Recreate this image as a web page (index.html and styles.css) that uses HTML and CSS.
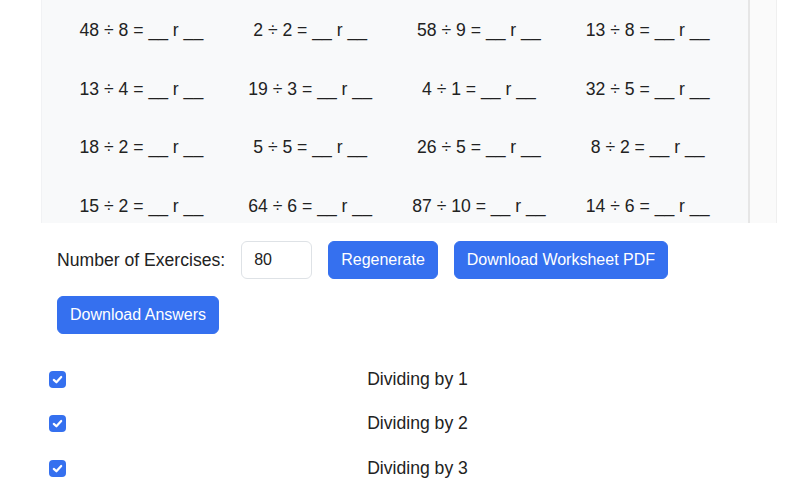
FILE: index.html
```html
<!DOCTYPE html>
<html lang="en">
<head>
  <meta charset="UTF-8" />
  <meta name="viewport" content="width=device-width, initial-scale=1.0"/>
  <title>Division Worksheet</title>
  <link rel="stylesheet" href="styles.css">
</head>
<body>

  <!-- WORKSHEET PREVIEW -->
  <div class="sheet">
    <div class="sheet-grid">
      <div class="problem">48 ÷ 8 = __ r __</div>
      <div class="problem">2 ÷ 2 = __ r __</div>
      <div class="problem">58 ÷ 9 = __ r __</div>
      <div class="problem">13 ÷ 8 = __ r __</div>
      <div class="problem">13 ÷ 4 = __ r __</div>
      <div class="problem">19 ÷ 3 = __ r __</div>
      <div class="problem">4 ÷ 1 = __ r __</div>
      <div class="problem">32 ÷ 5 = __ r __</div>
      <div class="problem">18 ÷ 2 = __ r __</div>
      <div class="problem">5 ÷ 5 = __ r __</div>
      <div class="problem">26 ÷ 5 = __ r __</div>
      <div class="problem">8 ÷ 2 = __ r __</div>
      <div class="problem">15 ÷ 2 = __ r __</div>
      <div class="problem">64 ÷ 6 = __ r __</div>
      <div class="problem">87 ÷ 10 = __ r __</div>
      <div class="problem">14 ÷ 6 = __ r __</div>
    </div>
    <div class="sheet-track"></div>
  </div>

  <!-- CONTROLS -->
  <div class="controls">
    <label class="count-label" for="count">Number of Exercises:</label>
    <input class="count-input" type="text" id="count" value="80" />
    <button class="btn">Regenerate</button>
    <button class="btn">Download Worksheet PDF</button>
    <button class="btn">Download Answers</button>
  </div>

  <!-- DIVISORS -->
  <div class="options">
    <label class="option">
      <span class="box"><svg width="17" height="17" viewBox="0 0 17 17"><path d="M4.8 8.9 L7.4 11.3 L12.2 6" fill="none" stroke="#fff" stroke-width="2.2" stroke-linecap="round" stroke-linejoin="round"/></svg></span>
      <span class="option-text">Dividing by 1</span>
    </label>
    <label class="option">
      <span class="box"><svg width="17" height="17" viewBox="0 0 17 17"><path d="M4.8 8.9 L7.4 11.3 L12.2 6" fill="none" stroke="#fff" stroke-width="2.2" stroke-linecap="round" stroke-linejoin="round"/></svg></span>
      <span class="option-text">Dividing by 2</span>
    </label>
    <label class="option">
      <span class="box"><svg width="17" height="17" viewBox="0 0 17 17"><path d="M4.8 8.9 L7.4 11.3 L12.2 6" fill="none" stroke="#fff" stroke-width="2.2" stroke-linecap="round" stroke-linejoin="round"/></svg></span>
      <span class="option-text">Dividing by 3</span>
    </label>
  </div>

</body>
</html>
```

FILE: styles.css
```css
body, html {
  margin: 0;
  padding: 0;
  font-family: "Liberation Sans", Arial, Helvetica, sans-serif;
  color: #222;
  background: #fff;
}

.sheet {
  display: flex;
  height: 223px;
  margin: 0 23px 0 41px;
  overflow: hidden;
}

.sheet-grid {
  flex: 1;
  display: grid;
  grid-template-columns: repeat(4, 1fr);
  grid-auto-rows: 58.7px;
  align-items: center;
  padding: 1px 16px 0 15px;
  background-color: #f8f9fa;
  border-left: 1px solid #f1f2f4;
}

.problem {
  text-align: center;
  font-size: 17.6px;
}

.sheet-track {
  width: 26px;
  background-color: #fafafa;
  border-left: 2px solid #e6e6e6;
  border-right: 1px solid #efefef;
}

.controls {
  display: flex;
  flex-wrap: wrap;
  align-items: center;
  gap: 17px 16px;
  margin: 18px 57px 0;
}

.count-label {
  font-size: 17.6px;
}

.count-input {
  box-sizing: border-box;
  width: 71px;
  height: 38px;
  padding: 6px 12px;
  font-family: inherit;
  font-size: 16px;
  color: #222;
  border: 1px solid #dee2e6;
  border-radius: 6px;
}

.btn {
  padding: 6px 12px;
  font-family: inherit;
  font-size: 16px;
  line-height: 24px;
  color: #fff;
  background-color: #3570ef;
  border: 1px solid #3570ef;
  border-radius: 6px;
  cursor: pointer;
}

.options {
  margin: 23px 31px 0 49px;
}

.option {
  display: grid;
  grid-template-columns: 17px 1fr;
  align-items: center;
  padding: 9px 0;
  font-size: 17.6px;
  line-height: 26.4px;
}

.box {
  display: block;
  width: 17px;
  height: 17px;
  border-radius: 4px;
  background-color: #3570ef;
}

.box svg {
  display: block;
}

.option-text {
  text-align: center;
}
```
